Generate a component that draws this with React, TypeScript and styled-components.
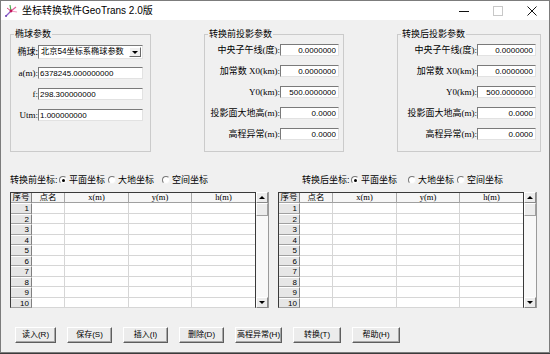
import React from "react";
import styled, { createGlobalStyle } from "styled-components";

const GlobalStyle = createGlobalStyle`
  html, body {
    margin: 0;
    padding: 0;
    background: #3b3b3b;
  }
  body {
    font-family: "Liberation Sans", "Noto Sans CJK SC", sans-serif;
    font-size: 9px;
    color: #000;
  }
  * {
    box-sizing: border-box;
  }
`;

type FieldDef = { label: string; value: string };

const ellipsoidFields: FieldDef[] = [
  { label: "a(m):", value: "6378245.000000000" },
  { label: "f:", value: "298.300000000" },
  { label: "Utm:", value: "1.000000000" },
];

const projFields: FieldDef[] = [
  { label: "中央子午线(度):", value: "0.0000000" },
  { label: "加常数 X0(km):", value: "0.0000000" },
  { label: "Y0(km):", value: "500.0000000" },
  { label: "投影面大地高(m):", value: "0.0000" },
  { label: "高程异常(m):", value: "0.0000" },
];

const columns = ["点名", "x(m)", "y(m)", "h(m)"];
const rows = Array.from({ length: 10 }, (_, i) => i + 1);

const buttons = [
  { text: "读入(R)", w: 41 },
  { text: "保存(S)", w: 45 },
  { text: "插入(I)", w: 45 },
  { text: "删除(D)", w: 45 },
  { text: "高程异常(H)", w: 47 },
  { text: "转换(T)", w: 48 },
  { text: "帮助(H)", w: 48 },
];

const AppIcon = () => (
  <svg width="14" height="14" viewBox="0 0 14 14">
    <path d="M2 12 L7 7" stroke="#8a5cc8" strokeWidth="1.2" />
    <path d="M7 7 L12 3" stroke="#e0609a" strokeWidth="1.2" />
    <path d="M7 7 L6 1" stroke="#4caf50" strokeWidth="1.2" />
    <path d="M7 7 L13 8" stroke="#f29ac0" strokeWidth="1.2" />
    <path d="M7 7 L3 4" stroke="#d8467a" strokeWidth="1" />
    <circle cx="7" cy="7" r="1.4" fill="#c2185b" />
    <circle cx="2" cy="12" r="1" fill="#6a3fb0" />
  </svg>
);

const CoordPanel = ({
  caption,
  indent,
  widths,
}: {
  caption: string;
  indent: number;
  widths: number[];
}) => (
  <SC.Panel>
    <SC.RadioRow $indent={indent}>
      <SC.RadioCaption>{caption}</SC.RadioCaption>
      {["平面坐标", "大地坐标", "空间坐标"].map((t, i) => (
        <SC.RadioOption key={t} $w={widths[i]}>
          <SC.RadioDot $checked={i === 0} />
          {t}
        </SC.RadioOption>
      ))}
    </SC.RadioRow>
    <SC.TableFrame>
      <SC.Grid>
        <SC.CornerCell>序号</SC.CornerCell>
        {columns.map((c, i) => (
          <SC.HeadCell key={c} $last={i === columns.length - 1}>
            {c}
          </SC.HeadCell>
        ))}
        {rows.map((r) => (
          <React.Fragment key={r}>
            <SC.RowHead>{r}</SC.RowHead>
            {columns.map((c, i) => (
              <SC.Cell key={c} $last={i === columns.length - 1} />
            ))}
          </React.Fragment>
        ))}
      </SC.Grid>
      <SC.ScrollBar>
        <SC.ScrollArrow>
          <SC.Arrow $up />
        </SC.ScrollArrow>
        <SC.Thumb />
        <SC.ScrollTrack />
        <SC.ScrollArrow>
          <SC.Arrow />
        </SC.ScrollArrow>
      </SC.ScrollBar>
    </SC.TableFrame>
  </SC.Panel>
);

const ProjectionGroup = ({
  title,
  width,
  labelWidth,
}: {
  title: string;
  width: number;
  labelWidth: number;
}) => (
  <SC.GroupBox $w={width}>
    <SC.GroupTitle>{title}</SC.GroupTitle>
    <SC.FieldList $top={4}>
      {projFields.map((f) => (
        <SC.Field key={f.label}>
          <SC.FieldLabel $w={labelWidth}>{f.label}</SC.FieldLabel>
          <SC.TextBox $w={59} $right defaultValue={f.value} />
        </SC.Field>
      ))}
    </SC.FieldList>
  </SC.GroupBox>
);

const App = () => {
  return (
    <>
      <GlobalStyle />
      <SC.Window>
        <SC.TitleBar>
          <SC.IconSlot>
            <AppIcon />
          </SC.IconSlot>
          <SC.TitleText>坐标转换软件GeoTrans 2.0版</SC.TitleText>
          <SC.WinButton>
            <svg width="10" height="10" viewBox="0 0 10 10">
              <path d="M0 5.5 H10" stroke="#111" strokeWidth="1" />
            </svg>
          </SC.WinButton>
          <SC.WinButton>
            <svg width="10" height="10" viewBox="0 0 10 10">
              <rect x="0.5" y="0.5" width="9" height="9" fill="none" stroke="#c8c8c8" />
            </svg>
          </SC.WinButton>
          <SC.WinButton>
            <svg width="10" height="10" viewBox="0 0 10 10">
              <path d="M0.5 0.5 L9.5 9.5 M9.5 0.5 L0.5 9.5" stroke="#111" strokeWidth="1" />
            </svg>
          </SC.WinButton>
        </SC.TitleBar>

        <SC.Body>
          <SC.GroupRow>
            <SC.GroupBox $w={141}>
              <SC.GroupTitle>椭球参数</SC.GroupTitle>
              <SC.FieldList $top={6}>
                <SC.Field>
                  <SC.FieldLabel $w={27} $cjk>
                    椭球:
                  </SC.FieldLabel>
                  <SC.Combo>
                    <SC.ComboText>北京54坐标系椭球参数</SC.ComboText>
                    <SC.ComboButton>
                      <SC.Arrow />
                    </SC.ComboButton>
                  </SC.Combo>
                </SC.Field>
                {ellipsoidFields.map((f) => (
                  <SC.Field key={f.label}>
                    <SC.FieldLabel $w={27}>{f.label}</SC.FieldLabel>
                    <SC.TextBox $w={105} defaultValue={f.value} />
                  </SC.Field>
                ))}
              </SC.FieldList>
            </SC.GroupBox>
            <ProjectionGroup title="转换前投影参数" width={140} labelWidth={75} />
            <ProjectionGroup title="转换后投影参数" width={144} labelWidth={79} />
          </SC.GroupRow>

          <SC.TablesRow>
            <CoordPanel caption="转换前坐标:" indent={0} widths={[49, 54]} />
            <CoordPanel caption="转换后坐标:" indent={24} widths={[57, 49]} />
          </SC.TablesRow>

          <SC.ButtonBar>
            {buttons.map((b) => (
              <SC.Button key={b.text} $w={b.w}>
                {b.text}
              </SC.Button>
            ))}
          </SC.ButtonBar>
        </SC.Body>
      </SC.Window>
    </>
  );
};

const SC = {
  Window: styled.div`
    display: flex;
    flex-direction: column;
    width: 550px;
    height: 353px;
    border: 1px solid #7c7c7c;
    background: #f0f0f0;
    overflow: hidden;
  `,
  TitleBar: styled.div`
    display: flex;
    align-items: center;
    flex-shrink: 0;
    height: 19px;
    background: #fff;
  `,
  IconSlot: styled.div`
    display: flex;
    align-items: center;
    margin-left: 3px;
  `,
  TitleText: styled.span`
    flex: 1;
    margin-left: 4px;
    font-size: 10px;
    line-height: 12px;
    white-space: nowrap;
  `,
  WinButton: styled.div`
    display: flex;
    justify-content: center;
    align-items: center;
    width: 34px;
    height: 19px;
  `,
  Body: styled.div`
    display: flex;
    flex-direction: column;
    flex: 1;
    padding: 14px 0 0 9px;
  `,
  GroupRow: styled.div`
    display: flex;
    align-items: flex-start;
    gap: 53px;
  `,
  GroupBox: styled.div<{ $w: number }>`
    width: ${({ $w }) => $w}px;
    height: 118px;
    border: 1px solid #cbcbcb;
  `,
  GroupTitle: styled.div`
    width: fit-content;
    height: 10px;
    margin: -6px 0 0 3px;
    padding: 0 1px;
    background: #f0f0f0;
    font-size: 9px;
    line-height: 10px;
    white-space: nowrap;
  `,
  FieldList: styled.div<{ $top: number }>`
    display: flex;
    flex-direction: column;
    gap: 7px;
    margin-top: ${({ $top }) => $top}px;
  `,
  Field: styled.div`
    display: flex;
    align-items: center;
    height: 14px;
  `,
  FieldLabel: styled.span<{ $w: number; $cjk?: boolean }>`
    flex-shrink: 0;
    width: ${({ $w }) => $w}px;
    font-family: ${({ $cjk }) =>
      $cjk
        ? `"Noto Sans CJK SC", sans-serif`
        : `"Liberation Serif", "Noto Sans CJK SC", serif`};
    font-size: 9px;
    line-height: 12px;
    text-align: right;
    white-space: nowrap;
  `,
  TextBox: styled.input<{ $w: number; $right?: boolean }>`
    width: ${({ $w }) => $w}px;
    height: 12px;
    margin: 0;
    padding: 0 2px 0 1px;
    border: 1px solid;
    border-color: #7a7a7a #e2e2e2 #e2e2e2 #7a7a7a;
    outline: none;
    background: #fff;
    font-family: "Liberation Sans", sans-serif;
    font-size: 8px;
    color: #000;
    text-align: ${({ $right }) => ($right ? "right" : "left")};
  `,
  Combo: styled.div`
    display: flex;
    align-items: center;
    width: 105px;
    height: 14px;
    padding: 1px;
    border: 1px solid;
    border-color: #7a7a7a #e2e2e2 #e2e2e2 #7a7a7a;
    background: #fff;
  `,
  ComboText: styled.span`
    flex: 1;
    padding-left: 1px;
    font-size: 8.2px;
    line-height: 10px;
    white-space: nowrap;
  `,
  ComboButton: styled.div`
    display: flex;
    justify-content: center;
    align-items: center;
    flex-shrink: 0;
    width: 12px;
    height: 10px;
    border: 1px solid;
    border-color: #fff #6a6a6a #6a6a6a #fff;
    background: #f0f0f0;
  `,
  Arrow: styled.span<{ $up?: boolean }>`
    width: 0;
    height: 0;
    border-left: 3px solid transparent;
    border-right: 3px solid transparent;
    ${({ $up }) =>
      $up ? `border-bottom: 3px solid #000;` : `border-top: 3px solid #000;`}
  `,
  TablesRow: styled.div`
    display: flex;
    gap: 9px;
    margin-top: 22px;
  `,
  Panel: styled.div`
    display: flex;
    flex-direction: column;
    gap: 6px;
    width: 259px;
  `,
  RadioRow: styled.div<{ $indent: number }>`
    display: flex;
    align-items: center;
    height: 12px;
    margin-left: ${({ $indent }) => $indent}px;
    font-size: 9px;
    line-height: 12px;
    white-space: nowrap;
  `,
  RadioCaption: styled.span`
    width: 49px;
  `,
  RadioOption: styled.span<{ $w?: number }>`
    display: flex;
    align-items: center;
    gap: 2px;
    width: ${({ $w }) => ($w ? `${$w}px` : "auto")};
  `,
  RadioDot: styled.span<{ $checked: boolean }>`
    display: flex;
    justify-content: center;
    align-items: center;
    width: 8px;
    height: 8px;
    border: 1px solid;
    border-color: #777 #f4f4f4 #f4f4f4 #777;
    border-radius: 50%;
    background: #fff;
    &::after {
      content: "";
      width: 3px;
      height: 3px;
      border-radius: 50%;
      background: ${({ $checked }) => ($checked ? "#000" : "transparent")};
    }
  `,
  TableFrame: styled.div`
    display: flex;
    height: 116px;
  `,
  Grid: styled.div`
    display: grid;
    grid-template-columns: 21px 33px 64px 63px 63px;
    grid-template-rows: 10px repeat(10, 10.5px);
    border: 1px solid #3a3a3a;
    border-bottom-color: #8a8a8a;
    background: #fff;
  `,
  CornerCell: styled.div`
    border-right: 1px solid #808080;
    border-bottom: 1px solid #a0a0a0;
    background: #e4e4e4;
    font-size: 8.5px;
    line-height: 9px;
    text-align: center;
    white-space: nowrap;
  `,
  HeadCell: styled.div<{ $last?: boolean }>`
    border-right: ${({ $last }) => ($last ? "none" : "1px solid #a8a8a8")};
    border-bottom: 1px solid #a0a0a0;
    background: #f6f6f6;
    font-family: "Liberation Serif", "Noto Sans CJK SC", serif;
    font-size: 8.5px;
    line-height: 9px;
    text-align: center;
  `,
  RowHead: styled.div`
    padding-right: 2px;
    border-top: 1px solid #fff;
    border-right: 1px solid #808080;
    border-bottom: 1px solid #a0a0a0;
    background: #e6e6e6;
    font-size: 8px;
    line-height: 9px;
    text-align: right;
  `,
  Cell: styled.div<{ $last?: boolean }>`
    border-right: ${({ $last }) => ($last ? "none" : "1px solid #d6d6d6")};
    border-bottom: 1px solid #d6d6d6;
  `,
  ScrollBar: styled.div`
    display: flex;
    flex-direction: column;
    width: 13px;
    border-right: 1px solid #9a9a9a;
    background: #f8f8f8;
  `,
  ScrollArrow: styled.div`
    display: flex;
    justify-content: center;
    align-items: center;
    height: 11px;
    border: 1px solid;
    border-color: #fff #8a8a8a #8a8a8a #fff;
    background: #ececec;
  `,
  Thumb: styled.div`
    height: 13px;
    border: 1px solid;
    border-color: #fff #a0a0a0 #a0a0a0 #fff;
    background: #ececec;
  `,
  ScrollTrack: styled.div`
    flex: 1;
  `,
  ButtonBar: styled.div`
    display: flex;
    gap: 11px;
    margin: 19px 0 0 5px;
  `,
  Button: styled.button<{ $w: number }>`
    width: ${({ $w }) => $w}px;
    height: 16px;
    padding: 0;
    border: 1px solid;
    border-color: #fff #5e5e5e #5e5e5e #fff;
    background: #ececec;
    box-shadow: inset -1px -1px 0 #a8a8a8;
    font-family: "Liberation Sans", "Noto Sans CJK SC", sans-serif;
    font-size: 8px;
    line-height: 12px;
    color: #000;
    white-space: nowrap;
  `,
};

export default App;
